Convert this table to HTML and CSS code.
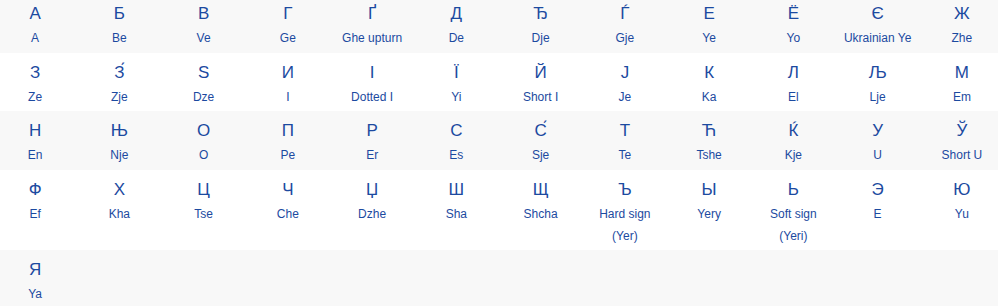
FILE: index.html
```html
<!DOCTYPE html>
<html lang="en">
<head>
<meta charset="utf-8">
<title>Cyrillic alphabet</title>
<link rel="stylesheet" href="styles.css">
</head>
<body>
<div class="alphabet">
  <div class="row">
    <div class="cell"><div class="ltr">А</div><div class="nm">A</div></div>
    <div class="cell"><div class="ltr">Б</div><div class="nm">Be</div></div>
    <div class="cell"><div class="ltr">В</div><div class="nm">Ve</div></div>
    <div class="cell"><div class="ltr">Г</div><div class="nm">Ge</div></div>
    <div class="cell"><div class="ltr">Ґ</div><div class="nm">Ghe upturn</div></div>
    <div class="cell"><div class="ltr">Д</div><div class="nm">De</div></div>
    <div class="cell"><div class="ltr">Ђ</div><div class="nm">Dje</div></div>
    <div class="cell"><div class="ltr">Ѓ</div><div class="nm">Gje</div></div>
    <div class="cell"><div class="ltr">Е</div><div class="nm">Ye</div></div>
    <div class="cell"><div class="ltr">Ё</div><div class="nm">Yo</div></div>
    <div class="cell"><div class="ltr">Є</div><div class="nm">Ukrainian Ye</div></div>
    <div class="cell"><div class="ltr">Ж</div><div class="nm">Zhe</div></div>
  </div>
  <div class="row">
    <div class="cell"><div class="ltr">З</div><div class="nm">Ze</div></div>
    <div class="cell"><div class="ltr">З́</div><div class="nm">Zje</div></div>
    <div class="cell"><div class="ltr">Ѕ</div><div class="nm">Dze</div></div>
    <div class="cell"><div class="ltr">И</div><div class="nm">I</div></div>
    <div class="cell"><div class="ltr">І</div><div class="nm">Dotted I</div></div>
    <div class="cell"><div class="ltr">Ї</div><div class="nm">Yi</div></div>
    <div class="cell"><div class="ltr">Й</div><div class="nm">Short I</div></div>
    <div class="cell"><div class="ltr">Ј</div><div class="nm">Je</div></div>
    <div class="cell"><div class="ltr">К</div><div class="nm">Ka</div></div>
    <div class="cell"><div class="ltr">Л</div><div class="nm">El</div></div>
    <div class="cell"><div class="ltr">Љ</div><div class="nm">Lje</div></div>
    <div class="cell"><div class="ltr">М</div><div class="nm">Em</div></div>
  </div>
  <div class="row">
    <div class="cell"><div class="ltr">Н</div><div class="nm">En</div></div>
    <div class="cell"><div class="ltr">Њ</div><div class="nm">Nje</div></div>
    <div class="cell"><div class="ltr">О</div><div class="nm">O</div></div>
    <div class="cell"><div class="ltr">П</div><div class="nm">Pe</div></div>
    <div class="cell"><div class="ltr">Р</div><div class="nm">Er</div></div>
    <div class="cell"><div class="ltr">С</div><div class="nm">Es</div></div>
    <div class="cell"><div class="ltr">С́</div><div class="nm">Sje</div></div>
    <div class="cell"><div class="ltr">Т</div><div class="nm">Te</div></div>
    <div class="cell"><div class="ltr">Ћ</div><div class="nm">Tshe</div></div>
    <div class="cell"><div class="ltr">Ќ</div><div class="nm">Kje</div></div>
    <div class="cell"><div class="ltr">У</div><div class="nm">U</div></div>
    <div class="cell"><div class="ltr">Ў</div><div class="nm">Short U</div></div>
  </div>
  <div class="row">
    <div class="cell"><div class="ltr">Ф</div><div class="nm">Ef</div></div>
    <div class="cell"><div class="ltr">Х</div><div class="nm">Kha</div></div>
    <div class="cell"><div class="ltr">Ц</div><div class="nm">Tse</div></div>
    <div class="cell"><div class="ltr">Ч</div><div class="nm">Che</div></div>
    <div class="cell"><div class="ltr">Џ</div><div class="nm">Dzhe</div></div>
    <div class="cell"><div class="ltr">Ш</div><div class="nm">Sha</div></div>
    <div class="cell"><div class="ltr">Щ</div><div class="nm">Shcha</div></div>
    <div class="cell"><div class="ltr">Ъ</div><div class="nm">Hard sign<br>(Yer)</div></div>
    <div class="cell"><div class="ltr">Ы</div><div class="nm">Yery</div></div>
    <div class="cell"><div class="ltr">Ь</div><div class="nm">Soft sign<br>(Yeri)</div></div>
    <div class="cell"><div class="ltr">Э</div><div class="nm">E</div></div>
    <div class="cell"><div class="ltr">Ю</div><div class="nm">Yu</div></div>
  </div>
  <div class="row">
    <div class="cell"><div class="ltr">Я</div><div class="nm">Ya</div></div>
  </div>
</div>
</body>
</html>
```
FILE: styles.css
```css
html, body {
  margin: 0;
  padding: 0;
  overflow: hidden;
  background: #ffffff;
}
body {
  font-family: "Liberation Sans", Arial, sans-serif;
  color: #1c4aa0;
}
.alphabet {
  width: 1011px;
  margin-left: -7px;
  margin-top: -6px;
}
.row {
  display: grid;
  grid-template-columns: repeat(12, 1fr);
}
.row:nth-child(odd) {
  background: #f8f8f8;
}
.cell {
  text-align: center;
  padding: 6px 2px 3.5px;
}
.ltr {
  font-size: 17px;
  line-height: 27px;
  height: 27px;
}
.nm {
  font-size: 12px;
  line-height: 22px;
}
```
